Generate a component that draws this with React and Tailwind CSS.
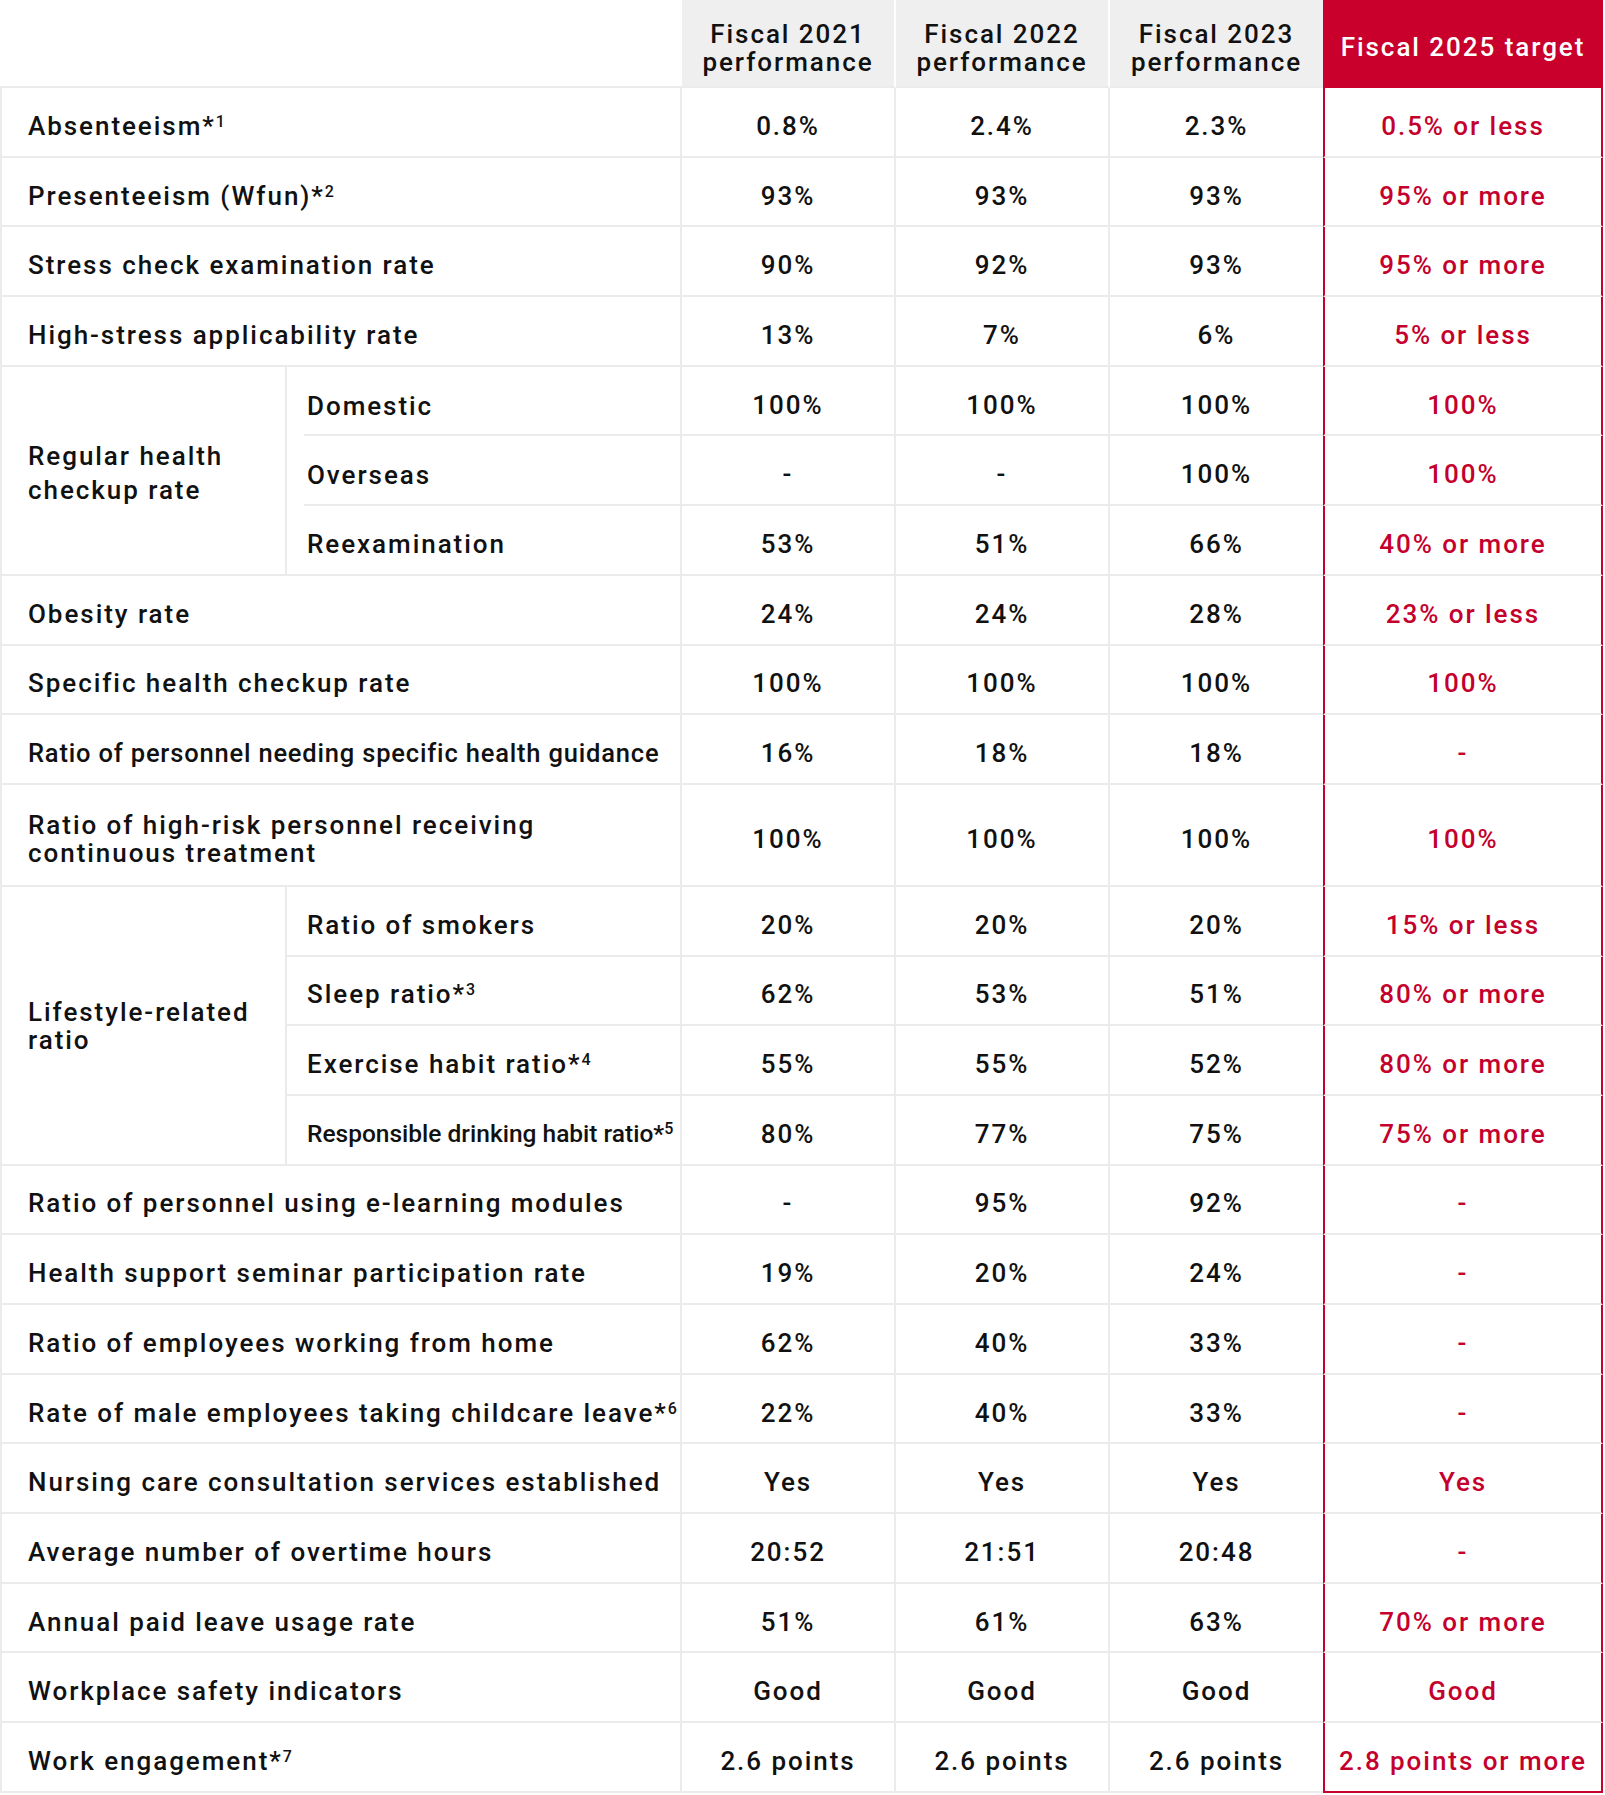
const RED = 'text-[#c4002d]'

const rows = [
  { label: 'Absenteeism', sup: '1', v: ['0.8%', '2.4%', '2.3%'], t: '0.5% or less' },
  { label: 'Presenteeism (Wfun)', sup: '2', v: ['93%', '93%', '93%'], t: '95% or more' },
  { label: 'Stress check examination rate', v: ['90%', '92%', '93%'], t: '95% or more' },
  { label: 'High-stress applicability rate', v: ['13%', '7%', '6%'], t: '5% or less' },
  {
    group: 'Regular health checkup rate',
    inset: true,
    items: [
      { label: 'Domestic', v: ['100%', '100%', '100%'], t: '100%' },
      { label: 'Overseas', v: ['-', '-', '100%'], t: '100%' },
      { label: 'Reexamination', v: ['53%', '51%', '66%'], t: '40% or more' },
    ],
  },
  { label: 'Obesity rate', v: ['24%', '24%', '28%'], t: '23% or less' },
  { label: 'Specific health checkup rate', v: ['100%', '100%', '100%'], t: '100%' },
  { label: 'Ratio of personnel needing specific health guidance', small: 'wide', v: ['16%', '18%', '18%'], t: '-' },
  { label: 'Ratio of high-risk personnel receiving', label2: 'continuous treatment', tall: true, v: ['100%', '100%', '100%'], t: '100%' },
  {
    group: 'Lifestyle-related ratio',
    items: [
      { label: 'Ratio of smokers', v: ['20%', '20%', '20%'], t: '15% or less' },
      { label: 'Sleep ratio', sup: '3', v: ['62%', '53%', '51%'], t: '80% or more' },
      { label: 'Exercise habit ratio', sup: '4', v: ['55%', '55%', '52%'], t: '80% or more' },
      { label: 'Responsible drinking habit ratio', sup: '5', small: 'narrow', v: ['80%', '77%', '75%'], t: '75% or more' },
    ],
  },
  { label: 'Ratio of personnel using e-learning modules', v: ['-', '95%', '92%'], t: '-' },
  { label: 'Health support seminar participation rate', v: ['19%', '20%', '24%'], t: '-' },
  { label: 'Ratio of employees working from home', v: ['62%', '40%', '33%'], t: '-' },
  { label: 'Rate of male employees taking childcare leave', sup: '6', v: ['22%', '40%', '33%'], t: '-' },
  { label: 'Nursing care consultation services established', v: ['Yes', 'Yes', 'Yes'], t: 'Yes' },
  { label: 'Average number of overtime hours', v: ['20:52', '21:51', '20:48'], t: '-' },
  { label: 'Annual paid leave usage rate', v: ['51%', '61%', '63%'], t: '70% or more' },
  { label: 'Workplace safety indicators', v: ['Good', 'Good', 'Good'], t: 'Good' },
  { label: 'Work engagement', sup: '7', v: ['2.6 points', '2.6 points', '2.6 points'], t: '2.8 points or more', last: true },
]

function Label({ r }) {
  const size =
    r.small === 'wide' ? 'text-[25.5px] tracking-[0.032em]' :
    r.small === 'narrow' ? 'text-[24.5px] tracking-normal' : ''
  return (
    <span className={size}>
      {r.label}
      {r.label2 && (<><br />{r.label2}</>)}
      {r.sup && (<>*<sup className="text-[16px] tracking-normal">{r.sup}</sup></>)}
    </span>
  )
}

function Values({ r }) {
  return (
    <>
      {r.v.map((x, i) => (
        <td
          key={i}
          className={`text-center pt-[8px] border-b-2 border-[#ebebeb] ${i < 2 ? 'border-r-2' : ''}`}
        >
          {x}
        </td>
      ))}
      <td
        className={`text-center pt-[8px] border-x-2 border-x-[#c8002b] border-b-2 ${RED} ${
          r.last ? 'border-b-[#c8002b]' : 'border-b-[#ebebeb]'
        }`}
      >
        {r.t}
      </td>
    </>
  )
}

export default function App() {
  return (
    <div className="bg-white w-[1605px] font-['Roboto',sans-serif] font-medium text-[26px] leading-[28px] tracking-[0.075em] text-[#111]">
      <table className="table-fixed border-separate border-spacing-0 w-[1603px]">
        <colgroup>
          <col className="w-[287px]" />
          <col className="w-[395px]" />
          <col className="w-[214px]" />
          <col className="w-[214px]" />
          <col className="w-[213px]" />
          <col className="w-[280px]" />
        </colgroup>
        <thead>
          <tr className="h-[88px]">
            <th colSpan={2} className="border-b-2 border-[#ebebeb]" />
            <th className="font-medium bg-[#efefef] pt-[10px] border-r-2 border-r-white border-b-2 border-b-[#ebebeb]">
              Fiscal 2021<br />performance
            </th>
            <th className="font-medium bg-[#efefef] pt-[10px] border-r-2 border-r-white border-b-2 border-b-[#ebebeb]">
              Fiscal 2022<br />performance
            </th>
            <th className="font-medium bg-[#efefef] pt-[10px] border-b-2 border-b-[#ebebeb]">
              Fiscal 2023<br />performance
            </th>
            <th className="font-medium bg-[#c8002b] text-white pt-[6px] border-x-2 border-[#c8002b]">
              Fiscal 2025 target
            </th>
          </tr>
        </thead>
        <tbody>
          {rows.map((r, gi) =>
            r.group ? (
              r.items.map((s, si) => {
                const lastSub = si === r.items.length - 1
                const subBorder = !r.inset || lastSub
                  ? 'border-b-2 border-b-[#ebebeb]'
                  : 'bg-[linear-gradient(#ebebeb,#ebebeb)] bg-no-repeat bg-[length:calc(100%-17px)_2px] bg-[position:right_bottom]'
                return (
                  <tr key={`${gi}-${si}`} className="h-[69.7px]">
                    {si === 0 && (
                      <td
                        rowSpan={r.items.length}
                        className={`pl-[26px] pr-4 border-l-2 border-r-2 border-b-2 border-[#ebebeb] ${r.inset ? 'leading-[34px] pt-[6px]' : 'pt-[2px]'}`}
                      >
                        {r.group}
                      </td>
                    )}
                    <td className={`pl-[20px] pt-[8px] border-r-2 border-r-[#ebebeb] ${subBorder}`}>
                      <Label r={s} />
                    </td>
                    <Values r={s} />
                  </tr>
                )
              })
            ) : (
              <tr key={gi} className={r.tall ? 'h-[102px]' : 'h-[69.7px]'}>
                <td colSpan={2} className="pl-[26px] pt-[8px] border-l-2 border-r-2 border-b-2 border-[#ebebeb]">
                  <Label r={r} />
                </td>
                <Values r={r} />
              </tr>
            )
          )}
        </tbody>
      </table>
    </div>
  )
}
